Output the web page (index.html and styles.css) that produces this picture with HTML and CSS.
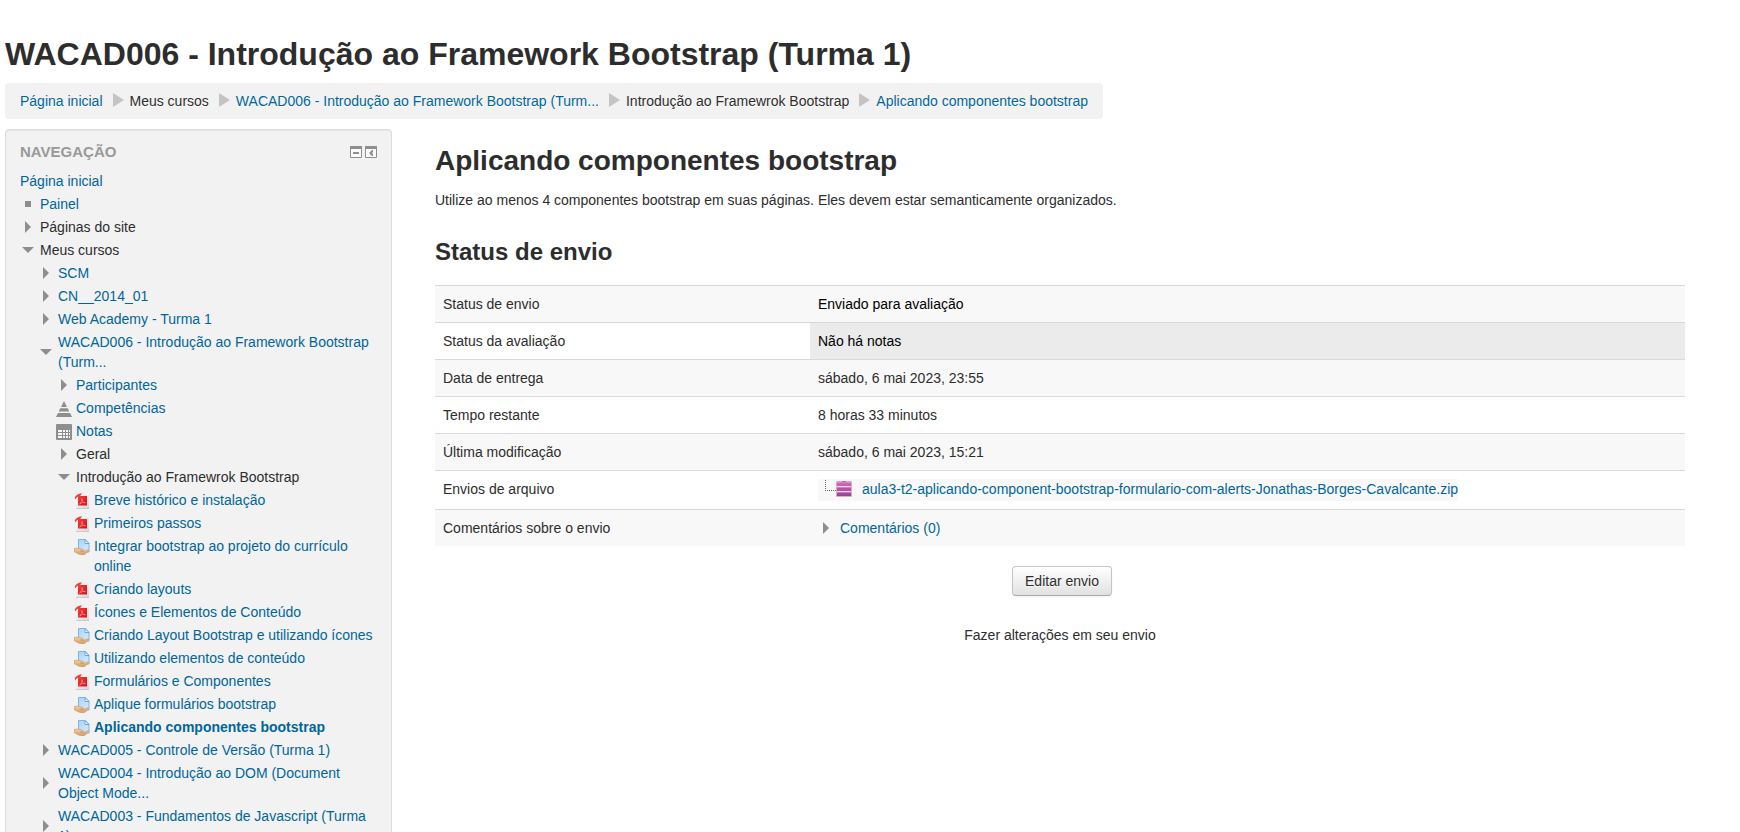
FILE: index.html
```html
<!DOCTYPE html>
<html lang="pt-BR">
<head>
<meta charset="utf-8">
<title>Aplicando componentes bootstrap</title>
<link rel="stylesheet" href="styles.css">
</head>
<body>
<svg class="defs" aria-hidden="true">
  <defs>
    <linearGradient id="red" x1="0" y1="0" x2="1" y2="1"><stop offset="0" stop-color="#f0413c"/><stop offset="1" stop-color="#d90d14"/></linearGradient>
    <linearGradient id="sheet" x1="0" y1="0" x2="1" y2="1"><stop offset="0" stop-color="#ffffff"/><stop offset="1" stop-color="#d3d3da"/></linearGradient>
    <linearGradient id="blue" x1="0" y1="0" x2="1" y2="1"><stop offset="0" stop-color="#a9d4f8"/><stop offset="1" stop-color="#d8ecfc"/></linearGradient>
    <linearGradient id="hand" x1="0" y1="0" x2="0" y2="1"><stop offset="0" stop-color="#f6cf9c"/><stop offset="1" stop-color="#d89b60"/></linearGradient>
    <linearGradient id="zip" x1="0" y1="0" x2="0" y2="1"><stop offset="0" stop-color="#d864b8"/><stop offset="1" stop-color="#964494"/></linearGradient>
  </defs>
  <symbol id="right" viewBox="0 0 16 16"><path d="M5 2l6 6-6 6z" fill="#8e8e8e"/></symbol>
  <symbol id="down" viewBox="0 0 16 16"><path d="M2 5h12l-6 6z" fill="#8e8e8e"/></symbol>
  <symbol id="square" viewBox="0 0 16 16"><path d="M5 5h6v6H5z" fill="#8e8e8e"/></symbol>
  <symbol id="pyramid" viewBox="0 0 16 16"><path d="M8 0l3 6H5zM4.300 7.300h7.400l1.600 3.200H2.700zM2 12h12l2 4H0z" fill="#8e8e8e"/></symbol>
  <symbol id="grid" viewBox="0 0 16 16"><rect width="16" height="16" rx="1" fill="#8e8e8e"/><path d="M2 6h4v2H2zM7 6h2v2H7zM10 6h2v2h-2zM13 6h1v2h-1zM2 9h4v2H2zM7 9h2v2H7zM10 9h2v2h-2zM13 9h1v2h-1zM2 12h4v2H2zM7 12h2v2H7zM10 12h2v2h-2zM13 12h1v2h-1z" fill="#f8f8f8"/></symbol>
  <symbol id="pdf" viewBox="0 0 16 16"><path d="M2 2h13v13.500H2z" fill="url(#sheet)"/><path d="M2 15.500h13V15H2z" fill="#a9a9b0"/><path d="M.800 4.500Q2 1 8 .3L6 3.300Q3 3.300 1.300 6.500z" fill="#ef3e3a"/><path d="M4 3h9v9.500H4z" fill="url(#red)"/><path d="M5.500 11c2-1 2.800-3.500 2.500-5.500c-.5 2 1 4 3.500 4.300c-2-.6-4-.3-6 1.200" fill="none" stroke="#ffb8b4" stroke-width=".5"/></symbol>
  <symbol id="assign" viewBox="0 0 16 16"><path d="M4.500.5h7l3.500 4V13H4.500z" fill="url(#blue)" stroke="#7fb2e8"/><path d="M11 .5v4h4z" fill="#f2f9ff" stroke="#6aa5e4"/><path d="M0 9.500L4 9l5 1.500c1 .5.500 1.500-.5 1.500H6.500l3 .5L13 11c1-.5 2.200-.2 1.500 1L11 15.200Q8 16.300 4.500 15L0 12.500z" fill="url(#hand)" stroke="#c48a52" stroke-width=".5"/></symbol>
  <symbol id="archive" viewBox="0 0 16 16"><rect width="16" height="16" rx="1" fill="#d6aed2"/><path d="M1 1.500h14V5H1zM1 6.500h14V10H1zM1 11.500h14V15H1z" fill="url(#zip)"/><path d="M1 5.500h14M1 10.500h14" stroke="#f0d6ed"/><path d="M6 0h4v1H6z" fill="#c75caa"/></symbol>
</svg>

<header class="page-header">
  <h1>WACAD006 - Introdução ao Framework Bootstrap (Turma 1)</h1>
  <nav aria-label="Trilha">
    <ul class="breadcrumb">
      <li><a href="#">Página inicial</a></li>
      <li>Meus cursos</li>
      <li><a href="#">WACAD006 - Introdução ao Framework Bootstrap (Turm...</a></li>
      <li>Introdução ao Framewrok Bootstrap</li>
      <li><a href="#">Aplicando componentes bootstrap</a></li>
    </ul>
  </nav>
</header>

<div class="page-content">
  <aside class="block">
    <div class="block-header">
      <h2>Navegação</h2>
      <div class="block-actions">
        <button type="button" aria-label="Ocultar bloco"><svg viewBox="0 0 12 12"><path d="M.5.500h11v11H.5z" fill="#fafafa" stroke="#8e8e8e"/><path d="M0 0h12v3H0zM3 6h6v2H3z" fill="#8e8e8e"/></svg></button>
        <button type="button" aria-label="Mover para a doca"><svg viewBox="0 0 12 12"><path d="M.5.500h11v11H.5z" fill="#fafafa" stroke="#8e8e8e"/><path d="M0 0h12v3H0zM8 4v2L7 7l1 1v2H7L4 7l3-3z" fill="#8e8e8e"/></svg></button>
      </div>
    </div>
    <ul class="tree">
      <li><p><a href="#">Página inicial</a></p>
        <ul class="first">
          <li><p><svg><use href="#square"/></svg><a href="#">Painel</a></p></li>
          <li><p><svg><use href="#right"/></svg><span>Páginas do site</span></p></li>
          <li><p><svg><use href="#down"/></svg><span>Meus cursos</span></p>
            <ul>
              <li><p><svg><use href="#right"/></svg><a href="#">SCM</a></p></li>
              <li><p><svg><use href="#right"/></svg><a href="#">CN__2014_01</a></p></li>
              <li><p><svg><use href="#right"/></svg><a href="#">Web Academy - Turma 1</a></p></li>
              <li><p><svg><use href="#down"/></svg><a href="#">WACAD006 - Introdução ao Framework Bootstrap (Turm...</a></p>
                <ul>
                  <li><p><svg><use href="#right"/></svg><a href="#">Participantes</a></p></li>
                  <li><p class="item"><svg><use href="#pyramid"/></svg><a href="#">Competências</a></p></li>
                  <li><p class="item"><svg><use href="#grid"/></svg><a href="#">Notas</a></p></li>
                  <li><p><svg><use href="#right"/></svg><span>Geral</span></p></li>
                  <li><p><svg><use href="#down"/></svg><span>Introdução ao Framewrok Bootstrap</span></p>
                    <ul>
                      <li><p class="item"><svg><use href="#pdf"/></svg><a href="#">Breve histórico e instalação</a></p></li>
                      <li><p class="item"><svg><use href="#pdf"/></svg><a href="#">Primeiros passos</a></p></li>
                      <li><p class="item"><svg><use href="#assign"/></svg><a href="#">Integrar bootstrap ao projeto do currículo online</a></p></li>
                      <li><p class="item"><svg><use href="#pdf"/></svg><a href="#">Criando layouts</a></p></li>
                      <li><p class="item"><svg><use href="#pdf"/></svg><a href="#">Ícones e Elementos de Conteúdo</a></p></li>
                      <li><p class="item"><svg><use href="#assign"/></svg><a href="#">Criando Layout Bootstrap e utilizando ícones</a></p></li>
                      <li><p class="item"><svg><use href="#assign"/></svg><a href="#">Utilizando elementos de conteúdo</a></p></li>
                      <li><p class="item"><svg><use href="#pdf"/></svg><a href="#">Formulários e Componentes</a></p></li>
                      <li><p class="item"><svg><use href="#assign"/></svg><a href="#">Aplique formulários bootstrap</a></p></li>
                      <li><p class="item current"><svg><use href="#assign"/></svg><a href="#" aria-current="page">Aplicando componentes bootstrap</a></p></li>
                    </ul>
                  </li>
                </ul>
              </li>
              <li><p><svg><use href="#right"/></svg><a href="#">WACAD005 - Controle de Versão (Turma 1)</a></p></li>
              <li><p><svg><use href="#right"/></svg><a href="#">WACAD004 - Introdução ao DOM (Document Object Mode...</a></p></li>
              <li><p><svg><use href="#right"/></svg><a href="#">WACAD003 - Fundamentos de Javascript (Turma 1)</a></p></li>
            </ul>
          </li>
        </ul>
      </li>
    </ul>
  </aside>

  <main class="main">
    <h2>Aplicando componentes bootstrap</h2>
    <p class="intro">Utilize ao menos 4 componentes bootstrap em suas páginas. Eles devem estar semanticamente organizados.</p>
    <h3>Status de envio</h3>
    <table class="status">
      <tbody>
        <tr><th scope="row">Status de envio</th><td class="submitted">Enviado para avaliação</td></tr>
        <tr><th scope="row">Status da avaliação</th><td class="notgraded">Não há notas</td></tr>
        <tr><th scope="row">Data de entrega</th><td>sábado, 6 mai 2023, 23:55</td></tr>
        <tr><th scope="row">Tempo restante</th><td>8 horas 33 minutos</td></tr>
        <tr><th scope="row">Última modificação</th><td>sábado, 6 mai 2023, 15:21</td></tr>
        <tr><th scope="row">Envios de arquivo</th><td><div class="file"><span class="branch"></span><svg><use href="#archive"/></svg><a href="#">aula3-t2-aplicando-component-bootstrap-formulario-com-alerts-Jonathas-Borges-Cavalcante.zip</a></div></td></tr>
        <tr><th scope="row">Comentários sobre o envio</th><td><a class="comments" href="#"><svg><use href="#right"/></svg>Comentários (0)</a></td></tr>
      </tbody>
    </table>
    <div class="actions">
      <button type="button" class="btn">Editar envio</button>
      <p>Fazer alterações em seu envio</p>
    </div>
  </main>
</div>
</body>
</html>
```
FILE: styles.css
```css
* { box-sizing: border-box; }
body {
  margin: 0;
  padding: 32px 55px 20px 5px;
  background: #fff;
  color: #2d2d2d;
  font: 14px/20px "Helvetica Neue", "Liberation Sans", Arial, sans-serif;
}
.defs { position: absolute; width: 0; height: 0; }
h1, h2, h3, p, ul { margin: 0; padding: 0; }
ul { list-style: none; }
a { color: #069; text-decoration: none; }
a:hover { text-decoration: underline; }
h1 { font-size: 32px; line-height: 44px; }

.breadcrumb {
  display: inline-flex;
  margin-top: 7px;
  padding: 8px 15px;
  background: #f2f2f2;
  border-radius: 4px;
  text-shadow: 0 1px 0 #fff;
  vertical-align: top;
}
.breadcrumb li { display: flex; align-items: center; }
.breadcrumb li + li::before {
  content: "";
  margin: 0 6px 2px 10px;
  border: solid transparent;
  border-width: 7px 0 7px 11px;
  border-left-color: #c4c4c4;
}

.page-content { display: flex; align-items: flex-start; gap: 43px; margin-top: 10px; }

.block {
  flex: 0 0 387px;
  padding: 11px 14px 20px;
  background: #f2f2f2;
  border: 1px solid #dcdcdc;
  border-radius: 4px;
  box-shadow: inset 0 1px 1px rgba(0, 0, 0, .05);
}
.block-header { display: flex; justify-content: space-between; align-items: center; margin-bottom: 8px; }
.block-header h2 { color: #999; font-size: 15px; line-height: 22px; text-transform: uppercase; }
.block-actions { display: flex; gap: 3px; }
.block-actions button { padding: 0; border: 0; background: none; }
.block-actions svg { display: block; width: 12px; height: 12px; }

.tree p { display: flex; align-items: center; gap: 4px; margin-bottom: 3px; }
.tree svg { flex: none; width: 16px; height: 16px; }
.tree ul { padding-left: 18px; }
.tree ul.first { padding-left: 0; }
.tree .item { align-items: flex-start; }
.tree .item svg { margin-top: 3px; }
.current { font-weight: bold; }

.main { flex: 1; min-width: 0; }
.main h2 { margin-top: 12px; font-size: 28px; line-height: 40px; }
.intro { margin-top: 9px; }
.main h3 { margin-top: 22px; font-size: 24px; line-height: 40px; }
.status { width: 100%; margin-top: 13px; border-collapse: collapse; table-layout: fixed; }
.status th, .status td {
  padding: 8px;
  border-top: 1px solid #d9d9d9;
  font-weight: normal;
  text-align: left;
  vertical-align: top;
}
.status th { width: 30%; }
.status tr:nth-child(odd) > * { background: #f8f8f8; }
.status .submitted { color: #000; }
.status .notgraded { background: #ebebeb; color: #000; }
.file {
  display: flex;
  align-items: flex-start;
  width: fit-content;
  height: 22px;
  background: #f8f8f8;
}
.branch { width: 11px; height: 11px; margin: 1px 0 0 7px; border: dotted #666; border-width: 0 0 1px 1px; }
.file svg { width: 16px; height: 16px; margin: 2px 10px 0 0; }
.comments { display: flex; align-items: center; gap: 6px; }
.comments svg { width: 16px; height: 16px; }

.actions { margin-top: 20px; text-align: center; }
.btn {
  margin-left: 4px;
  padding: 4px 12px;
  border: 1px solid #c4c4c4;
  border-bottom-color: #aaa;
  border-radius: 4px;
  background: linear-gradient(#fff, #e1e1e1);
  box-shadow: 0 1px 2px rgba(0, 0, 0, .05);
  color: #2d2d2d;
  font: inherit;
  text-shadow: 0 1px 1px rgba(255, 255, 255, .75);
}
.actions p { margin-top: 29px; }
```
